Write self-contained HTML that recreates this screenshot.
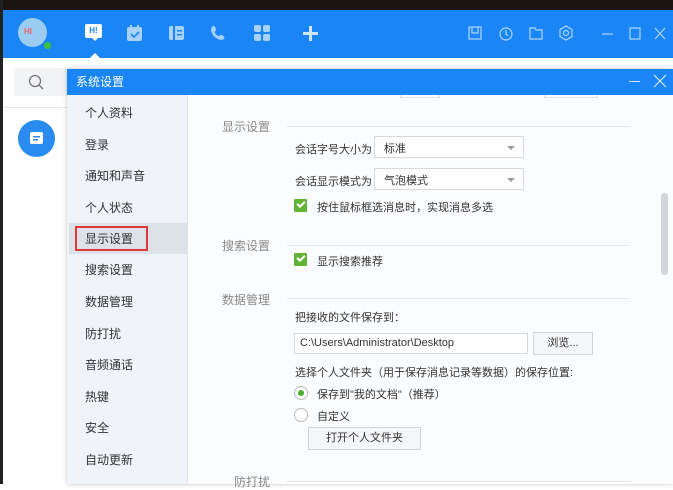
<!DOCTYPE html>
<html><head><meta charset="utf-8"><style>
*{margin:0;padding:0;box-sizing:border-box}
body{width:673px;height:484px;overflow:hidden;position:relative;background:#fff;font-family:"Liberation Sans","Noto Sans CJK SC",sans-serif;font-size:11px;color:#333}
.a{position:absolute}
.item{position:absolute;left:85px;font-size:12px;color:#333}
.lab{position:absolute;left:222px;font-size:12px;color:#888}
.line{position:absolute;left:287px;width:343px;height:1px;background:#e4e6ea}
.t{position:absolute;font-size:11px;color:#333;white-space:nowrap}
.sel{position:absolute;left:374px;width:150px;height:22px;border:1px solid #d6d9de;background:#fff;font-size:11px;padding:3px 0 0 9px}
.sel:after{content:"";position:absolute;right:8px;top:9px;border:4px solid transparent;border-top:4px solid #999}
.cb{position:absolute;left:294px;width:13px;height:13px;background:#62b336;border-radius:1px}
.cb:after{content:"";position:absolute;left:3px;top:2px;width:6px;height:3px;border-left:2px solid #fff;border-bottom:2px solid #fff;transform:rotate(-45deg)}
.btn{position:absolute;border:1px solid #cfd3d9;background:#f5f6f8;font-size:11px;text-align:center}
</style></head><body>
<div class="a" style="left:0;top:0;width:673px;height:11px;background:#1a1410"></div>
<div class="a" style="left:0;top:0;width:3px;height:484px;background:#222"></div>
<div class="a" style="left:3px;top:10px;width:670px;height:48px;background:#1a86f6"></div>
<!-- avatar -->
<div class="a" style="left:18px;top:18px;width:29px;height:29px;border-radius:50%;background:#9ccbf2"></div>
<div class="a" style="left:24px;top:27px;font-size:8px;color:#e66;font-weight:bold">HI</div>
<div class="a" style="left:43px;top:41px;width:9px;height:9px;border-radius:50%;background:#3ec23e;border:1px solid #1a86f6"></div>
<!-- top icons -->
<div class="a" style="left:85px;top:24px;width:17px;height:14px;background:#fff;border-radius:2px;color:#1a86f6;font-size:8px;font-weight:bold;text-align:center;line-height:14px">H!</div>
<div class="a" style="left:91px;top:37px;border:4px solid transparent;border-top:4px solid #fff"></div>
<svg class="a" style="left:125px;top:23px" width="20" height="20"><rect x="2" y="4" width="15" height="14" rx="2" fill="#a9d2fb"/><rect x="5" y="2" width="2" height="4" fill="#a9d2fb"/><rect x="12" y="2" width="2" height="4" fill="#a9d2fb"/><path d="M6 11l3 3 5-5" stroke="#1a86f6" stroke-width="1.6" fill="none"/></svg>
<svg class="a" style="left:167px;top:23px" width="20" height="20"><rect x="2" y="3" width="15" height="14" rx="2" fill="#a9d2fb"/><rect x="6" y="3" width="2" height="14" fill="#1a86f6"/><rect x="10" y="7" width="5" height="1.5" fill="#1a86f6"/><rect x="10" y="11" width="5" height="1.5" fill="#1a86f6"/></svg>
<svg class="a" style="left:209px;top:23px" width="20" height="20"><path d="M4 3c2-1 3 3 3 4s-2 1-1 3 3 3 4 3 1-2 3-1 3 3 2 4c-3 2-8 0-11-4S2 4 4 3z" fill="#a9d2fb"/></svg>
<svg class="a" style="left:253px;top:24px" width="18" height="18"><rect x="1" y="1" width="7" height="7" rx="2" fill="#a9d2fb"/><rect x="10" y="1" width="7" height="7" rx="2" fill="#a9d2fb"/><rect x="1" y="10" width="7" height="7" rx="2" fill="#a9d2fb"/><rect x="10" y="10" width="7" height="7" rx="2" fill="#a9d2fb"/></svg>
<svg class="a" style="left:302px;top:25px" width="17" height="17"><rect x="7" y="1" width="3" height="15" fill="#cfe5fc"/><rect x="1" y="7" width="15" height="3" fill="#cfe5fc"/></svg>
<div class="a" style="left:90px;top:53px;border:5px solid transparent;border-bottom:5px solid #fff;border-top:0"></div>
<svg class="a" style="left:466px;top:24px;opacity:.8" width="200" height="20" fill="none" stroke="#d6e9fd" stroke-width="1.2"><rect x="3" y="3" width="12" height="12"/><path d="M6 3v6h6V3"/><circle cx="40" cy="10" r="6"/><path d="M40 6v4l2 2"/><path d="M64 4h5l1 2h6v9H64z"/><path d="M100 2l6 3.5v7L100 16l-6-3.5v-7z"/><circle cx="100" cy="9" r="2.5"/><path d="M136 10h11"/><rect x="164" y="4" width="10" height="11"/><path d="M189 4l10 11M199 4l-10 11"/></svg>
<!-- left panel -->
<div class="a" style="left:3px;top:58px;width:670px;height:426px;background:#fff"></div>
<div class="a" style="left:14px;top:68px;width:60px;height:28px;background:#f2f3f5;border-radius:3px"></div>
<svg class="a" style="left:28px;top:74px" width="16" height="16" fill="none" stroke="#777" stroke-width="1.3"><circle cx="7" cy="7" r="5.5"/><path d="M11 11l4 4"/></svg>
<div class="a" style="left:3px;top:107px;width:65px;height:1px;background:#e8e8e8"></div>
<div class="a" style="left:18px;top:120px;width:37px;height:37px;border-radius:50%;background:#2a8cf0"></div>
<svg class="a" style="left:27px;top:129px" width="19" height="19"><rect x="3" y="3" width="13" height="12" rx="2" fill="#fff"/><rect x="6" y="7" width="7" height="1.5" fill="#2a8cf0"/><rect x="6" y="10" width="5" height="1.5" fill="#2a8cf0"/></svg>
<!-- dialog -->
<div class="a" style="left:67px;top:69px;width:606px;height:415px;background:#fbfcfe;box-shadow:0 0 4px rgba(0,0,0,.25)"></div>
<div class="a" style="left:67px;top:69px;width:606px;height:26px;background:#1a86f6"></div>
<div class="a" style="left:76px;top:73px;font-size:12px;color:#fff">系统设置</div>
<div class="a" style="left:629px;top:81px;width:11px;height:1px;background:#d6e9fd"></div>
<svg class="a" style="left:653px;top:74px" width="14" height="14" stroke="#d6e9fd" stroke-width="1.2"><path d="M1 1l12 12M13 1L1 13"/></svg>
<div class="a" style="left:67px;top:95px;width:121px;height:389px;background:#f0f3f8;border-right:1px solid #e2e5ea"></div>
<div class="a" style="left:69px;top:223px;width:118px;height:31px;background:#dde1e8"></div>
<div class="a" style="left:75px;top:226px;width:73px;height:25px;border:2px solid #e0383a"></div>
<div class="item" style="top:104px">个人资料</div>
<div class="item" style="top:136px">登录</div>
<div class="item" style="top:167px">通知和声音</div>
<div class="item" style="top:199px">个人状态</div>
<div class="item" style="top:230px">显示设置</div>
<div class="item" style="top:261px">搜索设置</div>
<div class="item" style="top:293px">数据管理</div>
<div class="item" style="top:325px">防打扰</div>
<div class="item" style="top:356px">音频通话</div>
<div class="item" style="top:388px">热键</div>
<div class="item" style="top:419px">安全</div>
<div class="item" style="top:451px">自动更新</div>
<!-- content -->
<div class="a" style="left:400px;top:95px;width:40px;height:3px;border:1px solid #ddd;border-top:0"></div>
<div class="a" style="left:544px;top:95px;width:54px;height:3px;border:1px solid #ddd;border-top:0"></div>
<div class="a" style="left:661px;top:193px;width:7px;height:82px;background:#d2d5da;border-radius:3px"></div>
<div class="lab" style="top:118px">显示设置</div><div class="line" style="top:126px"></div>
<div class="t" style="left:295px;top:141px">会话字号大小为</div>
<div class="sel" style="top:136px">标准</div>
<div class="t" style="left:295px;top:173px">会话显示模式为</div>
<div class="sel" style="top:168px">气泡模式</div>
<div class="cb" style="top:199px"></div><div class="t" style="left:317px;top:199px">按住鼠标框选消息时，实现消息多选</div>
<div class="lab" style="top:237px">搜索设置</div><div class="line" style="top:245px"></div>
<div class="cb" style="top:253px"></div><div class="t" style="left:317px;top:253px">显示搜索推荐</div>
<div class="lab" style="top:291px">数据管理</div><div class="line" style="top:298px"></div>
<div class="t" style="left:295px;top:309px">把接收的文件保存到：</div>
<div class="a" style="left:294px;top:333px;width:234px;height:21px;border:1px solid #d6d9de;background:#fff;font-size:11px;padding:3px 0 0 5px">C:\Users\Administrator\Desktop</div>
<div class="btn" style="left:533px;top:332px;width:60px;height:23px;line-height:21px">浏览...</div>
<div class="t" style="left:295px;top:364px">选择个人文件夹（用于保存消息记录等数据）的保存位置:</div>
<div class="a" style="left:294px;top:386px;width:14px;height:14px;border:1px solid #bbb;border-radius:50%;background:#fff"></div>
<div class="a" style="left:298px;top:390px;width:6px;height:6px;border-radius:50%;background:#4ab02a"></div>
<div class="t" style="left:317px;top:386px">保存到"我的文档"（推荐）</div>
<div class="a" style="left:294px;top:408px;width:14px;height:14px;border:1px solid #bbb;border-radius:50%;background:#fff"></div>
<div class="t" style="left:317px;top:408px">自定义</div>
<div class="btn" style="left:308px;top:427px;width:113px;height:23px;line-height:21px">打开个人文件夹</div>
<div class="lab" style="top:473px;left:234px">防打扰</div><div class="line" style="top:481px"></div>
</body></html>
